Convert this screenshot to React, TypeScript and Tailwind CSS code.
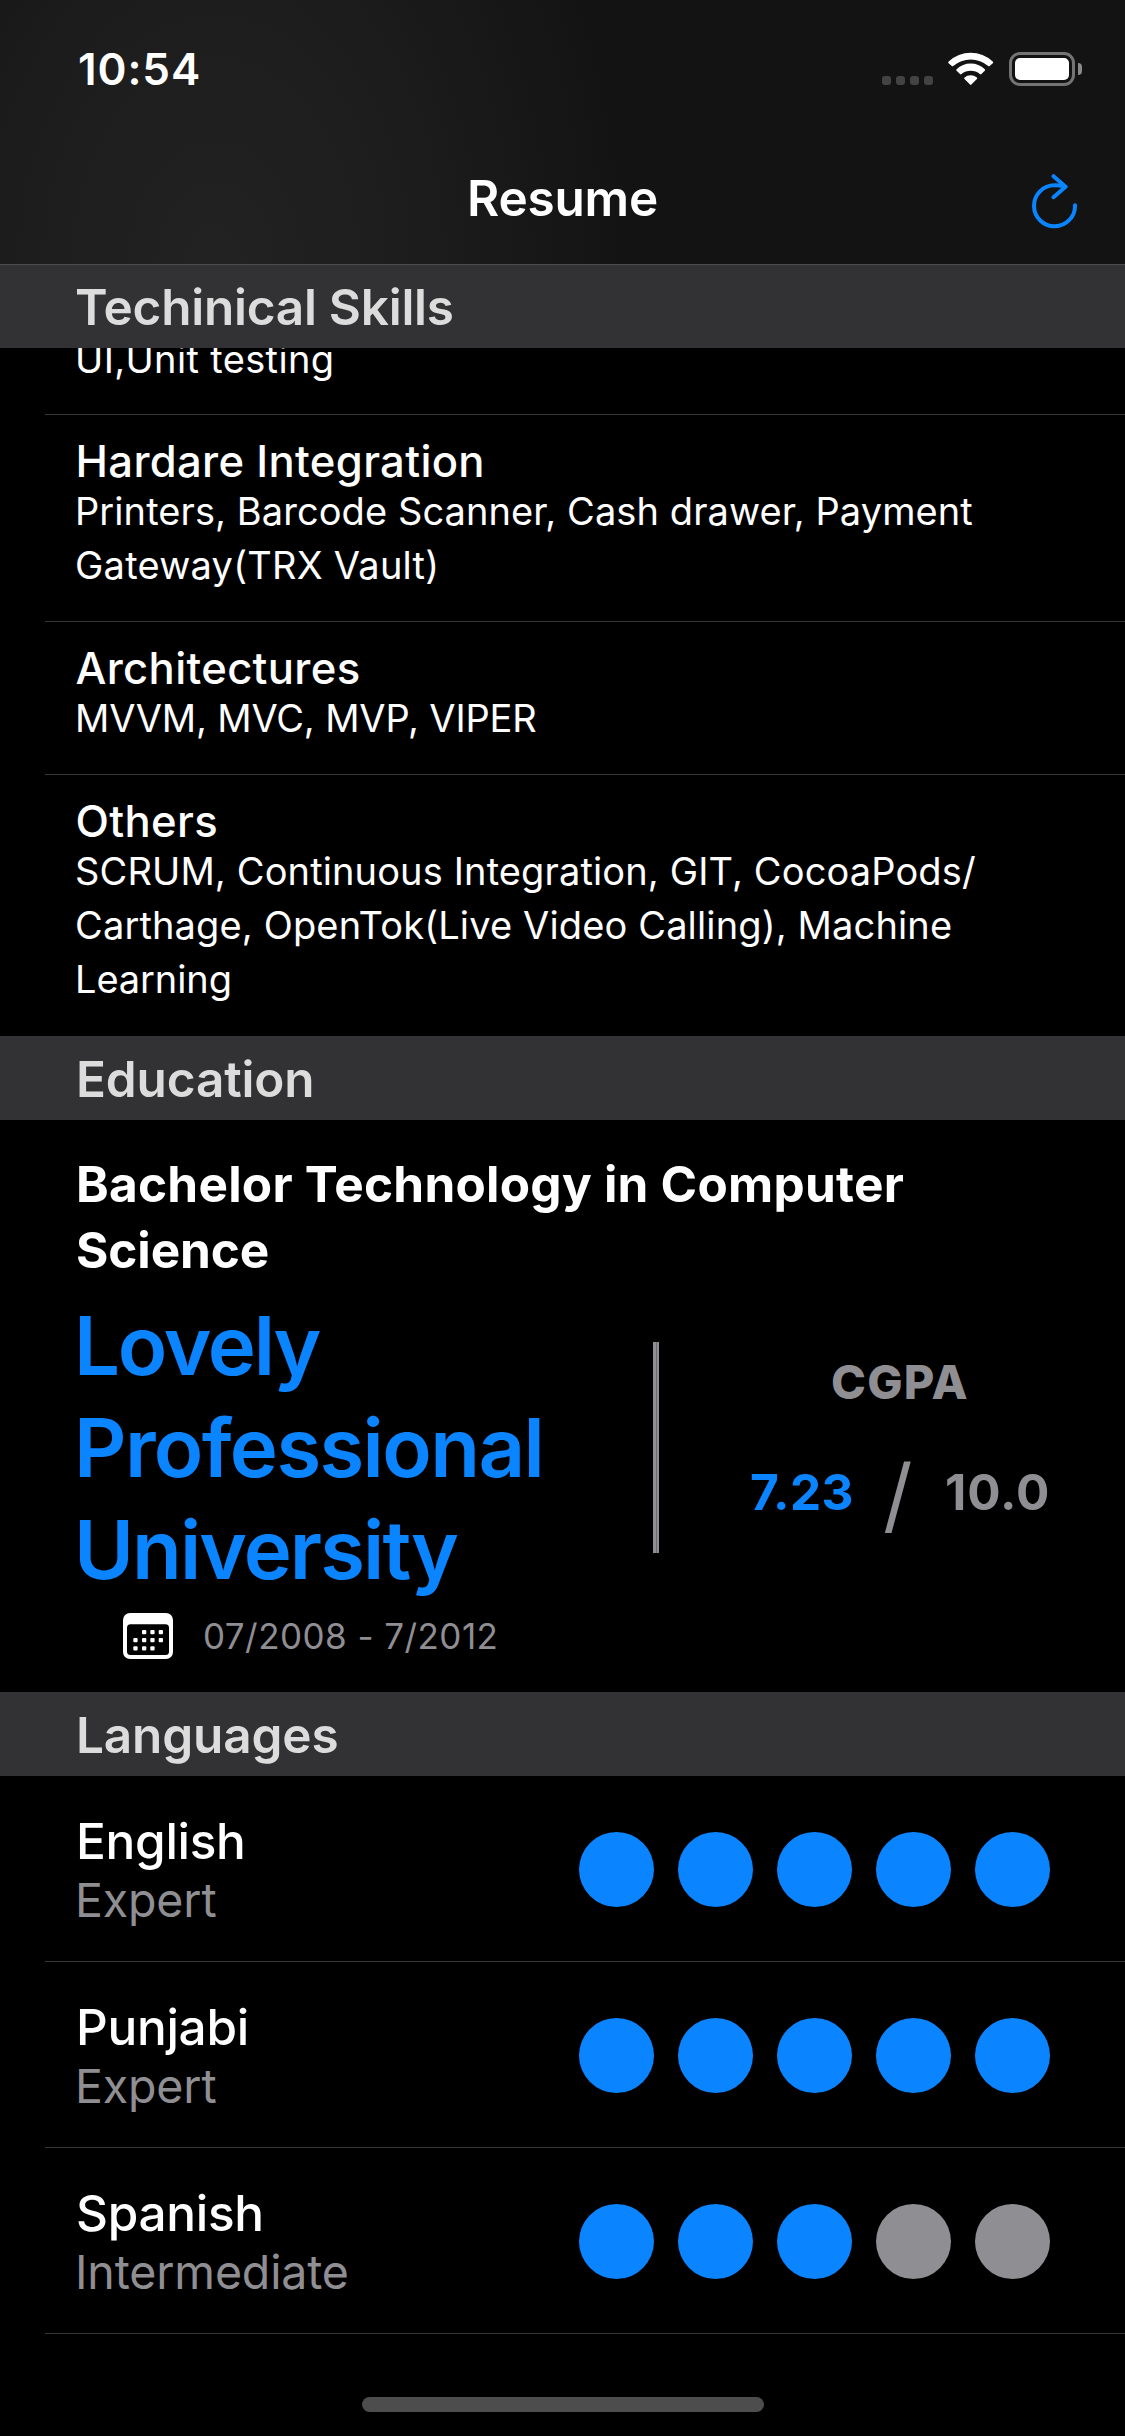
type Line = { text: string; tracking: string };
type Skill = { title: string; lines: Line[]; height: string; divider: boolean };

const skills: Skill[] = [
  {
    title: "Hardare Integration",
    lines: [
      { text: "Printers, Barcode Scanner, Cash drawer, Payment", tracking: "tracking-[0.08px]" },
      { text: "Gateway(TRX Vault)", tracking: "tracking-[0.24px]" },
    ],
    height: "h-[207px]",
    divider: true,
  },
  {
    title: "Architectures",
    lines: [{ text: "MVVM, MVC, MVP, VIPER", tracking: "tracking-[-0.16px]" }],
    height: "h-[153px]",
    divider: true,
  },
  {
    title: "Others",
    lines: [
      { text: "SCRUM, Continuous Integration, GIT, CocoaPods/", tracking: "tracking-[0.13px]" },
      { text: "Carthage, OpenTok(Live Video Calling), Machine", tracking: "tracking-[0.14px]" },
      { text: "Learning", tracking: "tracking-[-0.1px]" },
    ],
    height: "h-[261px]",
    divider: false,
  },
];

const languages = [
  { name: "English", level: "Expert", score: 5 },
  { name: "Punjabi", level: "Expert", score: 5 },
  { name: "Spanish", level: "Intermediate", score: 3 },
];

function WifiIcon() {
  return (
    <svg width="46" height="34" viewBox="0 0 46 34" fill="#fff">
      <path d="M.7 9.6A32 32 0 0 1 44.7 9.6Q45.6 10.4 44.8 11.2L41.6 14Q40.9 14.6 40.2 14A27 27 0 0 0 5.2 14Q4.5 14.6 3.8 14L.6 11.2Q-.2 10.4.7 9.6Z" />
      <path d="M8.6 17.2A20.5 20.5 0 0 1 36.8 17.2Q37.6 18 36.8 18.8L33.4 22.1Q32.7 22.8 31.9 22.1A14.5 14.5 0 0 0 13.5 22.1Q12.7 22.8 12 22.1L8.6 18.8Q7.8 18 8.6 17.2Z" />
      <path d="M16.5 25.6A9.6 9.6 0 0 1 28.9 25.6Q29.6 26.3 28.9 27L23.4 32.6Q22.7 33.3 22 32.6L16.5 27Q15.8 26.3 16.5 25.6Z" />
    </svg>
  );
}

function RefreshIcon() {
  return (
    <svg
      width="46"
      height="56"
      viewBox="0 0 46 56"
      fill="none"
      stroke="#0a84ff"
      strokeWidth="4"
      strokeLinecap="round"
      strokeLinejoin="round"
    >
      <path d="M43 31.2A20.5 20.5 0 1 1 22.5 11.3Q27 11.2 32.5 12.5" />
      <path d="M21.5 2.2 33.6 12.7 21.5 23.2" />
    </svg>
  );
}

function CalendarIcon() {
  const rows = [
    { y: 17, xs: [19, 27.3, 35.7] },
    { y: 25, xs: [10.3, 19, 27.3, 35.7] },
    { y: 33.3, xs: [10.3, 19, 27.3] },
  ];
  return (
    <svg width="50" height="46" viewBox="0 0 50 46">
      <rect width="50" height="46" rx="7" fill="#fff" />
      <rect x="4" y="11.3" width="42" height="30.7" rx="3.5" fill="#000" />
      {rows.map((r) =>
        r.xs.map((x) => (
          <rect key={`${x}-${r.y}`} x={x} y={r.y} width="4.3" height="4.3" rx="1" fill="#fff" />
        )),
      )}
    </svg>
  );
}

function StatusBar() {
  return (
    <div className="flex items-start justify-between pl-[78px] pr-[43px] pt-[47px]">
      <span className="text-[44px] font-semibold leading-[44px] tracking-[0.9px] text-white">10:54</span>
      <div className="mt-[5px] flex h-[34px] items-start">
        <div className="mt-[24px] flex gap-[5px]">
          <i className="size-[9px] rounded-[3px] bg-[#434343]" />
          <i className="size-[9px] rounded-[3px] bg-[#434343]" />
          <i className="size-[9px] rounded-[3px] bg-[#434343]" />
          <i className="size-[9px] rounded-[3px] bg-[#434343]" />
        </div>
        <div className="ml-[15px]">
          <WifiIcon />
        </div>
        <div className="ml-[15px] flex h-[34px] w-[66px] rounded-[11px] border-3 border-[#747474] p-[3px]">
          <div className="flex-1 rounded-[5px] bg-white" />
        </div>
        <div className="ml-[3px] mt-[11px] h-[12px] w-[4px] rounded-r-full bg-[#8a8a8a]" />
      </div>
    </div>
  );
}

function SectionHeader({ title }: { title: string }) {
  return (
    <h2 className="h-[84px] bg-[#323234] pl-[76px] text-[49.5px] font-semibold leading-[87px] tracking-[-0.15px] text-[#dcdcdc]">
      {title}
    </h2>
  );
}

function Separator() {
  return <div className="ml-[45px] h-px shrink-0 bg-[#373739]" />;
}

function SkillRow({ skill }: { skill: Skill }) {
  return (
    <div className={`flex flex-col ${skill.height}`}>
      <div className="flex-1 pl-[75px] pt-[23px]">
        <h3 className="pl-[0.5px] text-[43.6px] font-medium leading-[48px] tracking-[0.33px]">{skill.title}</h3>
        <div className="-mt-[2px] text-[38px] leading-[54px]">
          {skill.lines.map((line) => (
            <p key={line.text} className={`whitespace-nowrap ${line.tracking}`}>
              {line.text}
            </p>
          ))}
        </div>
      </div>
      {skill.divider && <Separator />}
    </div>
  );
}

function Education() {
  return (
    <div className="flex h-[572px] flex-col pt-[31px]">
      <h3 className="pl-[76px] text-[49.5px] font-bold leading-[66px]">
        <span className="tracking-[0.25px]">Bachelor Technology in Computer</span>
        <br />
        <span className="tracking-[-0.1px]">Science</span>
      </h3>
      <div className="mt-[12px] flex">
        <div className="w-[653px] pl-[74px]">
          <p className="text-[81.4px] font-semibold leading-[102px] text-[#0a84ff]">
            <span className="tracking-[-2.2px]">Lovely</span>
            <br />
            <span className="tracking-[-1.6px]">Professional</span>
            <br />
            <span className="tracking-[-1.9px]">University</span>
          </p>
          <div className="mt-[12px] flex items-start pl-[49px]">
            <CalendarIcon />
            <span className="ml-[30px] text-[35px] leading-[46px] tracking-[0.45px] text-[#8e8e93]">
              07/2008 - 7/2012
            </span>
          </div>
        </div>
        <div className="mt-[47px] flex h-[211px] w-[6px]">
          <div className="w-[3px] bg-[#8e8e93]" />
          <div className="w-px bg-[#6a6a6e]" />
          <div className="w-[2px] bg-[#8e8e93]" />
        </div>
        <div className="pt-[59px]">
          <p className="pl-[172px] text-[47px] font-extrabold leading-[56px] tracking-[1.2px] text-[#8e8e93]">CGPA</p>
          <div className="mt-[52px] flex items-start pl-[91px] leading-[60px] text-[#8e8e93]">
            <span className="w-[133px] text-[49.5px] font-bold tracking-[0.4px] text-[#0a84ff]">7.23</span>
            <span className="mt-[3px] w-[62px] text-[82px] font-normal">/</span>
            <span className="text-[49.5px] font-bold tracking-[0.9px]">10.0</span>
          </div>
        </div>
      </div>
    </div>
  );
}

function LanguageRow({ name, level, score }: { name: string; level: string; score: number }) {
  return (
    <div className="flex h-[186px] flex-col">
      <div className="flex flex-1 justify-between pl-[76px] pr-[75px]">
        <div className="pt-[35px]">
          <h3 className="text-[49.5px] font-medium leading-[60px] tracking-[-0.3px]">{name}</h3>
          <p className="-ml-px mt-px text-[46.5px] leading-[56px] tracking-[-0.15px] text-[#8e8e93]">{level}</p>
        </div>
        <div className="flex gap-[24px] pt-[56px]">
          {[1, 2, 3, 4, 5].map((n) => (
            <div key={n} className={`size-[75px] rounded-full ${n <= score ? "bg-[#0a84ff]" : "bg-[#8e8e93]"}`} />
          ))}
        </div>
      </div>
      <Separator />
    </div>
  );
}

export default function App() {
  return (
    <main className="flex h-[2436px] w-[1125px] flex-col overflow-hidden bg-black font-['Inter',sans-serif] text-white">
      <header className="h-[264px] shrink-0 bg-[#131313] bg-[radial-gradient(ellipse_420px_620px_at_215px_270px,#222222_0%,#1d1d1d_45%,#171717_78%,#131313_100%)]">
        <StatusBar />
        <div className="mt-[77px] grid grid-cols-[1fr_auto_1fr] items-start">
          <span />
          <h1 className="text-[49.5px] font-semibold leading-[60px] tracking-[-0.2px]">Resume</h1>
          <button className="mr-[47px] mt-[6px] justify-self-end" aria-label="Refresh">
            <RefreshIcon />
          </button>
        </div>
      </header>
      <section>
        <h2 className="h-[84px] border-t border-[#4b4b4b] bg-[#323234] pl-[75px] text-[49.5px] font-semibold leading-[85px] tracking-[-0.25px] text-[#dcdcdc]">
          Techinical Skills
        </h2>
        <div className="flex h-[67px] flex-col overflow-hidden">
          <p className="-mt-[16px] flex-1 pl-[75px] text-[38px] leading-[54px] tracking-[0.35px]">UI,Unit testing</p>
          <Separator />
        </div>
        {skills.map((s) => (
          <SkillRow key={s.title} skill={s} />
        ))}
      </section>
      <section>
        <SectionHeader title="Education" />
        <Education />
      </section>
      <section>
        <SectionHeader title="Languages" />
        {languages.map((l) => (
          <LanguageRow key={l.name} {...l} />
        ))}
      </section>
      <div className="mx-auto mt-[63px] h-[15px] w-[402px] shrink-0 rounded-full bg-[#4d4d4d]" />
    </main>
  );
}
